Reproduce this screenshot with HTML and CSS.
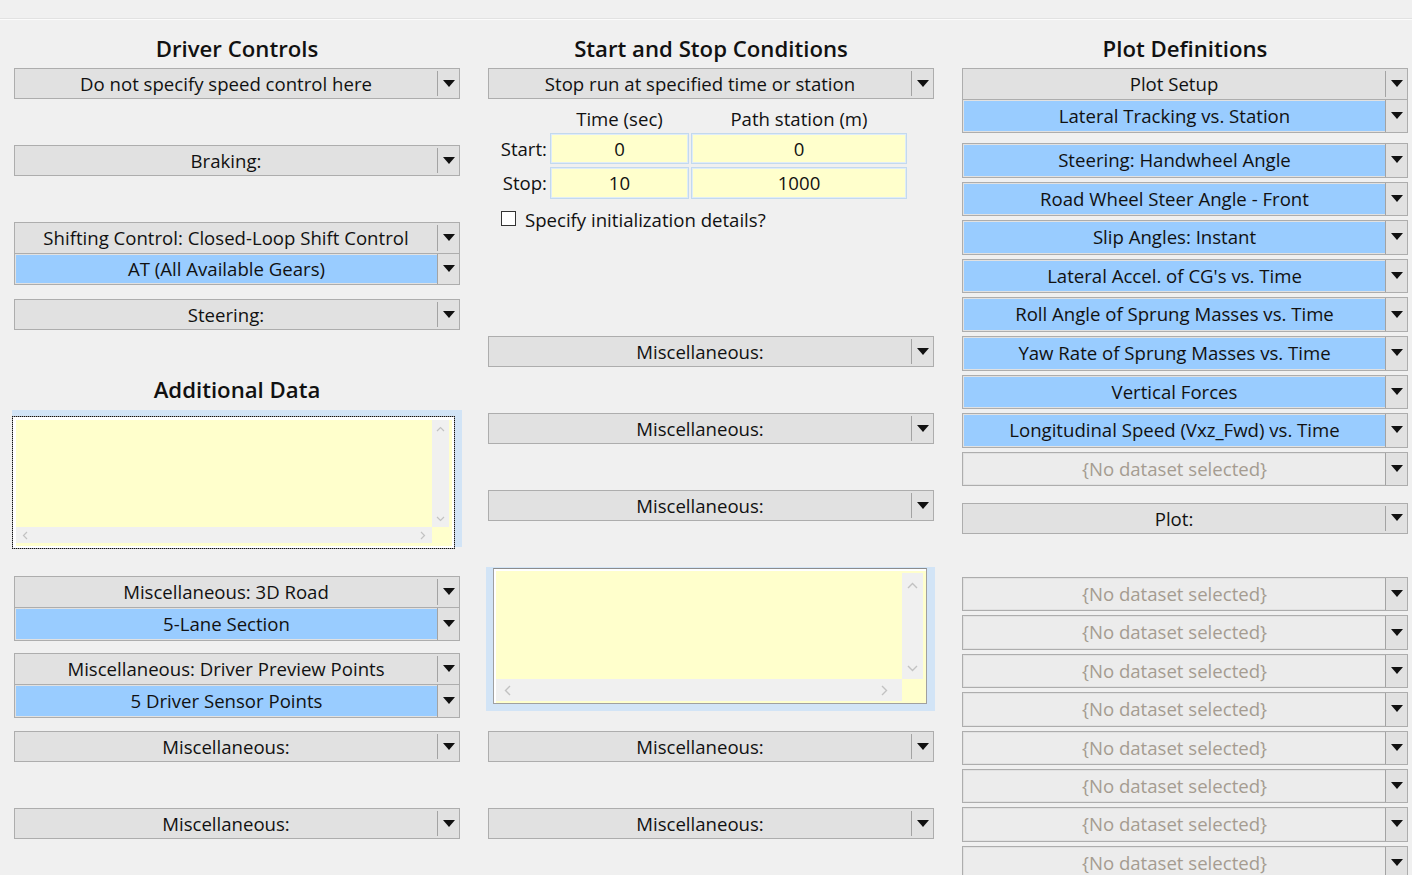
FILE: index.html
```html
<!DOCTYPE html>
<html>
<head>
<meta charset="utf-8">
<link rel="stylesheet" href="styles.css">
</head>
<body>
<div class="topbar"></div>
<div class="columns">
  <!-- Left column -->
  <div class="col">
    <h2 class="heading">Driver Controls</h2>
    <div class="dd mt6"><span class="dd-label">Do not specify speed control here</span><span class="dd-arrow"></span></div>
    <div class="dd mt46"><span class="dd-label">Braking:</span><span class="dd-arrow"></span></div>
    <div class="group mt46">
      <div class="dd"><span class="dd-label">Shifting Control: Closed-Loop Shift Control</span><span class="dd-arrow"></span></div>
      <div class="dd sel"><span class="dd-label">AT (All Available Gears)</span><span class="dd-arrow"></span></div>
    </div>
    <div class="dd mt14"><span class="dd-label">Steering:</span><span class="dd-arrow"></span></div>
    <h2 class="heading mt47">Additional Data</h2>
    <div class="ta-wrap ta-left mt7">
      <div class="ta-box focus">
        <div class="ta-inner">
          <div class="ta-text"></div>
          <div class="vscroll">
            <svg width="9" height="6" viewBox="0 0 9 6"><polyline points="1,5 4.5,1.5 8,5" fill="none" stroke="#c2c2c2" stroke-width="1.2"/></svg>
            <svg width="9" height="6" viewBox="0 0 9 6"><polyline points="1,1 4.5,4.5 8,1" fill="none" stroke="#c2c2c2" stroke-width="1.2"/></svg>
          </div>
          <div class="hscroll">
            <svg width="6" height="9" viewBox="0 0 6 9"><polyline points="5,1 1.5,4.5 5,8" fill="none" stroke="#c2c2c2" stroke-width="1.2"/></svg>
            <svg width="6" height="9" viewBox="0 0 6 9"><polyline points="1,1 4.5,4.5 1,8" fill="none" stroke="#c2c2c2" stroke-width="1.2"/></svg>
          </div>
          <div class="corner"></div>
        </div>
      </div>
    </div>
    <div class="group mt29">
      <div class="dd"><span class="dd-label">Miscellaneous: 3D Road</span><span class="dd-arrow"></span></div>
      <div class="dd sel tallsel"><span class="dd-label">5-Lane Section</span><span class="dd-arrow"></span></div>
    </div>
    <div class="group mt12">
      <div class="dd"><span class="dd-label">Miscellaneous: Driver Preview Points</span><span class="dd-arrow"></span></div>
      <div class="dd sel tallsel"><span class="dd-label">5 Driver Sensor Points</span><span class="dd-arrow"></span></div>
    </div>
    <div class="dd mt13"><span class="dd-label">Miscellaneous:</span><span class="dd-arrow"></span></div>
    <div class="dd mt46"><span class="dd-label">Miscellaneous:</span><span class="dd-arrow"></span></div>
  </div>

  <!-- Middle column -->
  <div class="col">
    <h2 class="heading">Start and Stop Conditions</h2>
    <div class="dd mt6"><span class="dd-label">Stop run at specified time or station</span><span class="dd-arrow"></span></div>
    <div class="cond-grid">
      <span></span><span class="cond-head">Time (sec)</span><span class="cond-head">Path station (m)</span>
      <span class="cond-label">Start:</span><span class="cond-input">0</span><span class="cond-input">0</span>
      <span class="cond-label">Stop:</span><span class="cond-input">10</span><span class="cond-input">1000</span>
    </div>
    <label class="check-row"><span class="check-box"></span><span>Specify initialization details?</span></label>
    <div class="dd mt106"><span class="dd-label">Miscellaneous:</span><span class="dd-arrow"></span></div>
    <div class="dd mt46"><span class="dd-label">Miscellaneous:</span><span class="dd-arrow"></span></div>
    <div class="dd mt46"><span class="dd-label">Miscellaneous:</span><span class="dd-arrow"></span></div>
    <div class="ta-wrap ta-mid mt46">
      <div class="ta-box plain">
        <div class="ta-inner">
          <div class="ta-text"></div>
          <div class="vscroll">
            <svg width="11" height="7" viewBox="0 0 11 7"><polyline points="1,6 5.5,1.5 10,6" fill="none" stroke="#c2c2c2" stroke-width="1.4"/></svg>
            <svg width="11" height="7" viewBox="0 0 11 7"><polyline points="1,1 5.5,5.5 10,1" fill="none" stroke="#c2c2c2" stroke-width="1.4"/></svg>
          </div>
          <div class="hscroll">
            <svg width="7" height="11" viewBox="0 0 7 11"><polyline points="6,1 1.5,5.5 6,10" fill="none" stroke="#c2c2c2" stroke-width="1.4"/></svg>
            <svg width="7" height="11" viewBox="0 0 7 11"><polyline points="1,1 5.5,5.5 1,10" fill="none" stroke="#c2c2c2" stroke-width="1.4"/></svg>
          </div>
          <div class="corner"></div>
        </div>
      </div>
    </div>
    <div class="dd mt20"><span class="dd-label">Miscellaneous:</span><span class="dd-arrow"></span></div>
    <div class="dd mt46"><span class="dd-label">Miscellaneous:</span><span class="dd-arrow"></span></div>
  </div>

  <!-- Right column -->
  <div class="col">
    <h2 class="heading">Plot Definitions</h2>
    <div class="group mt6">
      <div class="dd"><span class="dd-label">Plot Setup</span><span class="dd-arrow"></span></div>
      <div class="dd sel tallsel"><span class="dd-label">Lateral Tracking vs. Station</span><span class="dd-arrow"></span></div>
    </div>
    <div class="plot-list mt10">
      <div class="dd tall sel"><span class="dd-label">Steering: Handwheel Angle</span><span class="dd-arrow"></span></div>
      <div class="dd tall sel"><span class="dd-label">Road Wheel Steer Angle - Front</span><span class="dd-arrow"></span></div>
      <div class="dd tall sel"><span class="dd-label">Slip Angles: Instant</span><span class="dd-arrow"></span></div>
      <div class="dd tall sel"><span class="dd-label">Lateral Accel. of CG's vs. Time</span><span class="dd-arrow"></span></div>
      <div class="dd tall sel"><span class="dd-label">Roll Angle of Sprung Masses vs. Time</span><span class="dd-arrow"></span></div>
      <div class="dd tall sel"><span class="dd-label">Yaw Rate of Sprung Masses vs. Time</span><span class="dd-arrow"></span></div>
      <div class="dd tall sel"><span class="dd-label">Vertical Forces</span><span class="dd-arrow"></span></div>
      <div class="dd tall sel"><span class="dd-label">Longitudinal Speed (Vxz_Fwd) vs. Time</span><span class="dd-arrow"></span></div>
      <div class="dd tall empty"><span class="dd-label">{No dataset selected}</span><span class="dd-arrow"></span></div>
    </div>
    <div class="dd plot-dd"><span class="dd-label">Plot:</span><span class="dd-arrow"></span></div>
    <div class="plot-list lower">
      <div class="dd tall2 empty"><span class="dd-label">{No dataset selected}</span><span class="dd-arrow"></span></div>
      <div class="dd tall2 empty"><span class="dd-label">{No dataset selected}</span><span class="dd-arrow"></span></div>
      <div class="dd tall2 empty"><span class="dd-label">{No dataset selected}</span><span class="dd-arrow"></span></div>
      <div class="dd tall2 empty"><span class="dd-label">{No dataset selected}</span><span class="dd-arrow"></span></div>
      <div class="dd tall2 empty"><span class="dd-label">{No dataset selected}</span><span class="dd-arrow"></span></div>
      <div class="dd tall2 empty"><span class="dd-label">{No dataset selected}</span><span class="dd-arrow"></span></div>
      <div class="dd tall2 empty"><span class="dd-label">{No dataset selected}</span><span class="dd-arrow"></span></div>
      <div class="dd tall2 empty"><span class="dd-label">{No dataset selected}</span><span class="dd-arrow"></span></div>
    </div>
  </div>
</div>
</body>
</html>
```

FILE: styles.css
```css
* { box-sizing: border-box; }

html, body {
  margin: 0;
  padding: 0;
  height: 875px;
  overflow: hidden;
  background: #f0f0f0;
  font-family: "Open Sans", "Noto Sans", "Liberation Sans", sans-serif;
  font-size: 18.6px;
  color: #111;
}

.topbar {
  height: 19px;
  border-bottom: 1px solid #e2e2e2;
  box-shadow: 0 1px 0 #fbfbfb;
}

.columns {
  display: grid;
  grid-template-columns: repeat(3, 446px);
  column-gap: 28px;
  padding: 17px 0 0 14px;
}

.col {
  display: flex;
  flex-direction: column;
}

.heading {
  margin: 0;
  height: 26px;
  line-height: 26px;
  font-size: 22.2px;
  font-weight: 600;
  text-align: center;
  color: #111;
}

/* spacing */
.mt6 { margin-top: 6px; }
.mt7 { margin-top: 7px; }
.mt10 { margin-top: 10px; }
.mt12 { margin-top: 12px; }
.mt13 { margin-top: 13px; }
.mt14 { margin-top: 14px; }
.mt20 { margin-top: 20px; }
.mt29 { margin-top: 29px; }
.mt46 { margin-top: 46px; }
.mt47 { margin-top: 47px; }
.mt106 { margin-top: 106px; }

/* dropdown */
.dd {
  display: flex;
  height: 31px;
  border: 1px solid #adadad;
  background: #e1e1e1;
}

.dd-label {
  flex: 1;
  text-align: center;
  line-height: 29px;
  white-space: nowrap;
  overflow: hidden;
}

.dd-arrow {
  width: 22px;
  flex: none;
  display: flex;
  align-items: center;
  justify-content: center;
  border-left: 1px solid #a3a3a3;
  margin: 2px 0;
  padding-bottom: 1px;
}

.dd-arrow::after {
  content: "";
  width: 0;
  height: 0;
  border-left: 6px solid transparent;
  border-right: 6px solid transparent;
  border-top: 7px solid #111;
}

.dd.sel .dd-label {
  background: #99ccff;
  margin: 1px 0 1px 1px;
  line-height: 28px;
}

.dd.sel .dd-arrow,
.dd.empty .dd-arrow {
  margin: 0;
}

.dd.empty .dd-label {
  background: #ececec;
  margin: 1px 0 1px 1px;
  color: #a59c91;
}

/* grouped dropdowns */
.group {
  border: 1px solid #adadad;
  display: flex;
  flex-direction: column;
}

.group .dd {
  border: none;
  height: 30px;
}

.group .dd + .dd {
  border-top: 1px solid #adadad;
  height: 31px;
}

.group .dd.tallsel {
  height: 33px;
}

.group .dd.tallsel .dd-label {
  line-height: 29px;
}

/* right column list */
.plot-list {
  display: flex;
  flex-direction: column;
  gap: 4px;
}

.dd.tall {
  height: 34.6px;
}

.dd.tall2 {
  height: 34.4px;
}

.dd.tall .dd-label,
.dd.tall2 .dd-label {
  line-height: 30px;
}

.plot-dd {
  margin-top: 16.6px;
}

.plot-list.lower {
  margin-top: 43px;
}

/* start / stop grid */
.cond-grid {
  display: grid;
  grid-template-columns: 60px 139px 216px;
  grid-template-rows: 22px 31px 32px;
  column-gap: 2px;
  row-gap: 3px;
  margin-top: 9px;
}

.cond-head {
  text-align: center;
  line-height: 22px;
}

.cond-label {
  text-align: right;
  line-height: 32px;
  padding-right: 1px;
}

.cond-input {
  background: #ffffcc;
  border: 1px solid #c3d9ee;
  box-shadow: inset 0 0 0 1px #dfecf8;
  text-align: center;
  line-height: 30px;
}

.check-row {
  display: flex;
  align-items: center;
  height: 22px;
  margin-top: 9px;
  padding-left: 13px;
}

.check-box {
  width: 15px;
  height: 15px;
  border: 1px solid #333;
  background: #fff;
  margin-right: 9px;
  margin-top: -2px;
}

/* text areas */
.ta-wrap {
  background: #d2e4f6;
  margin-left: -2px;
}

.ta-left {
  width: 450px;
  height: 137px;
  padding: 6px 7px 0 0;
}

.ta-left .ta-box {
  height: 133px;
}

.ta-mid {
  width: 449px;
  height: 144px;
  padding: 1px 8px 7px 7px;
}

.ta-mid .ta-box {
  height: 136px;
}

.ta-box {
  background: #fff;
  border: 1px solid #a0a0a0;
  padding: 2px;
}

.ta-box.focus {
  outline: 1px dotted #111;
  outline-offset: -1px;
  padding: 3px 2px 2px 3px;
}

.ta-box.plain {
  border-top-color: #8c8c8c;
  padding: 2px 0 0 2px;
}

.ta-inner {
  height: 100%;
  background: #ffffcc;
  display: grid;
  grid-template-columns: 1fr 17px;
  grid-template-rows: 1fr 16px;
  padding: 0 3px 3px 0;
}

.ta-mid .ta-inner {
  grid-template-columns: 1fr 21px;
  grid-template-rows: 1fr 22px;
  padding: 2px 3px 2px 0;
}

.vscroll {
  background: #f0f0f0;
  display: flex;
  flex-direction: column;
  justify-content: space-between;
  align-items: center;
  padding: 6px 0 5px;
}

.hscroll {
  background: #f0f0f0;
  display: flex;
  justify-content: space-between;
  align-items: center;
  padding: 0 6px 0 6px;
}

.ta-mid .vscroll { padding: 9px 0 7px; }
.ta-mid .hscroll { padding: 0 14px 0 8px; }

.corner {
  background: #ffffcc;
}
```
